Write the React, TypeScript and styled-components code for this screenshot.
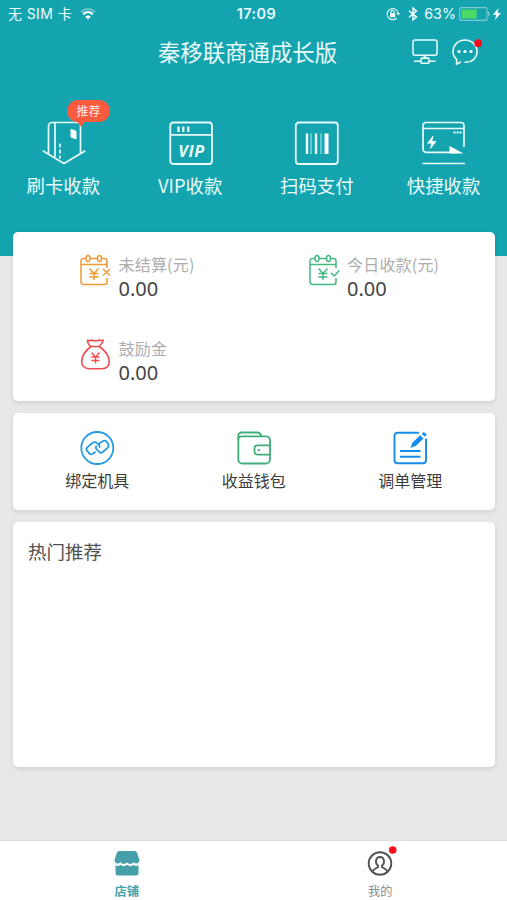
import React from 'react';
import styled, { createGlobalStyle } from 'styled-components';

const TEAL = '#14a4b0';

const GlobalStyle = createGlobalStyle`
  * { box-sizing: border-box; }
  body {
    margin: 0;
    background: #e8e8e8;
    font-family: "Noto Sans CJK SC", "Noto Sans", sans-serif;
    color: #444;
  }
  svg { display: block; overflow: visible; flex: none; }
`;

const Screen = styled.div`
  width: 507px;
  height: 900px;
  display: flex;
  flex-direction: column;
  overflow: hidden;
  background: #e8e8e8;
`;

const Hero = styled.header`
  height: 256px;
  flex: none;
  background: ${TEAL};
  color: #e9fbfc;
`;

const StatusBar = styled.div`
  height: 28px;
  padding: 0 6px 0 8px;
  display: grid;
  grid-template-columns: 1fr auto 1fr;
  align-items: center;
  font-family: Inter, "Noto Sans CJK SC", sans-serif;
  font-size: 14.5px;
  line-height: 28px;
`;

const Carrier = styled.div`
  display: flex;
  align-items: center;
  gap: 8px;
  font-size: 14px;
  letter-spacing: 0.4px;
`;

const Clock = styled.div`
  font-weight: 600;
  font-size: 14.5px;
  letter-spacing: 0.4px;
  padding-left: 4px;
`;

const Indicators = styled.div`
  display: flex;
  align-items: center;
  justify-content: flex-end;
`;

const BluetoothSlot = styled.span`
  margin-left: 8px;
`;

const BoltSlot = styled.span`
  margin-left: 2px;
`;

const Percent = styled.span`
  font-size: 14.3px;
  margin: 0 3px 0 6px;
`;

const TitleBar = styled.div`
  height: 48px;
  display: grid;
  grid-template-columns: 67px 1fr 67px;
  align-items: center;
  padding: 0 29px 0 17px;
`;

const Title = styled.h1`
  margin: 0;
  padding-bottom: 2px;
  grid-column: 2;
  text-align: center;
  font-size: 22.4px;
  line-height: 28px;
  font-weight: 400;
  white-space: nowrap;
`;

const TitleActions = styled.div`
  display: flex;
  justify-content: flex-end;
  gap: 14px;
`;

const QuickRow = styled.nav`
  display: grid;
  grid-template-columns: repeat(4, 1fr);
  padding-top: 45px;
`;

const QuickItem = styled.div`
  display: flex;
  flex-direction: column;
  align-items: center;
  position: relative;
`;

const QuickLabel = styled.span`
  margin-top: 6px;
  font-size: 18.4px;
  line-height: 29px;
`;

const Recommend = styled.span`
  position: absolute;
  left: 67px;
  top: -21px;
  width: 43px;
  height: 22px;
  border-radius: 11px;
  background: #fa5a3e;
  color: #ffece6;
  font-size: 12px;
  line-height: 22px;
  text-align: center;
  &::after {
    content: '';
    position: absolute;
    left: 9px;
    top: 20px;
    border: 5px solid transparent;
    border-top: 7px solid #fa5a3e;
    border-bottom: 0;
  }
`;

const Content = styled.main`
  flex: 1;
  margin-top: -24px;
  padding: 0 12px 0 13px;
  display: flex;
  flex-direction: column;
  gap: 12px;
`;

const Card = styled.section<{ $height: number }>`
  height: ${({ $height }) => $height}px;
  flex: none;
  background: #fff;
  border-radius: 5px;
  box-shadow: 0 2px 5px rgba(0, 0, 0, 0.1);
`;

const StatsCard = styled(Card)`
  display: grid;
  grid-template-columns: 228.5px 1fr;
  grid-template-rows: 84px 85px;
  padding-left: 67px;
`;

const Stat = styled.div`
  display: flex;
  align-items: flex-start;
  gap: 7.5px;
  padding-top: 22px;
`;

const StatText = styled.div`
  margin-top: -1px;
`;

const StatLabel = styled.div`
  font-size: 16px;
  line-height: 22px;
  letter-spacing: 0.2px;
  color: #adadad;
`;

const StatValue = styled.div`
  font-family: "Noto Sans", sans-serif;
  font-size: 20px;
  line-height: 28px;
  color: #444;
`;

const ToolsCard = styled(Card)`
  display: grid;
  grid-template-columns: repeat(3, 156.5px);
  padding: 18px 0 0 6px;
`;

const Tool = styled.div`
  display: flex;
  flex-direction: column;
  align-items: center;
`;

const ToolLabel = styled.span`
  margin-top: 4px;
  font-size: 16px;
  line-height: 23px;
  color: #3c3c3c;
`;

const HotTitle = styled.h2`
  margin: 0;
  padding: 15px;
  font-size: 18.5px;
  line-height: 28px;
  font-weight: 400;
  color: #505050;
`;

const TabBar = styled.footer`
  height: 60px;
  flex: none;
  display: grid;
  grid-template-columns: 1fr 1fr;
  background: #fff;
  border-top: 1px solid #dcdcdc;
`;

const Tab = styled.div<{ $active?: boolean }>`
  display: flex;
  flex-direction: column;
  align-items: center;
  padding-top: 9px;
  font-size: 12.2px;
  line-height: 18px;
  gap: 6px;
  font-weight: ${({ $active }) => ($active ? 700 : 400)};
  color: ${({ $active }) => ($active ? '#3fa3ad' : '#8c8c8c')};
`;

const WifiIcon = () => (
  <svg width="16" height="12" viewBox="0 0 16 12" fill="none" stroke="#fff">
    <path d="M1 4.2C5-.1 11-.1 15 4.2" strokeWidth="1.6" opacity=".45" />
    <path d="M3.3 6.3c2.8-2.8 6.6-2.8 9.4 0" strokeWidth="2.2" />
    <path d="M8 11.5 5.2 8.7c1.6-1.5 4-1.5 5.6 0z" fill="#fff" stroke="none" />
  </svg>
);

const LockIcon = () => (
  <svg width="14" height="14" viewBox="0 0 14 14" fill="none" stroke="#e9fbfc" strokeWidth="1.1">
    <path d="M10.7 11A5.6 5.6 0 1 1 12.2 6" />
    <path d="m10.4 6 1.9 2.6L14 6z" fill="#e9fbfc" stroke="none" />
    <rect x="4" y="6.2" width="5.2" height="4" fill="#fff" stroke="none" />
    <path d="M5 6.5V5a1.6 1.6 0 0 1 3.2 0v1.5" />
  </svg>
);

const BluetoothIcon = () => (
  <svg width="10" height="14" viewBox="0 0 10 14" fill="none" stroke="#fff" strokeWidth="1.4">
    <path d="m1 3.8 7.5 6.3L5 13V1l3.5 2.9L1 10.2" />
  </svg>
);

const BatteryIcon = () => (
  <svg width="32" height="14" viewBox="0 0 32 14">
    <rect x=".6" y=".6" width="27.4" height="12.8" rx="2" fill="none" stroke="#7fc9d0" strokeWidth="1.1" />
    <rect x="2.5" y="2.5" width="15.2" height="9" fill="#4cd964" />
    <path d="M29.2 4.5c2 .6 2 4.4 0 5z" fill="#7fc9d0" />
  </svg>
);

const BoltIcon = () => (
  <svg width="8" height="12" viewBox="0 0 8 12">
    <path d="M5.5 0 0 6.7h3.2L2 12l6-7.1H4.7z" fill="#fff" />
  </svg>
);

const TerminalIcon = () => (
  <svg width="26" height="26" viewBox="0 0 26 26" fill="none" stroke="#e9fbfc" strokeWidth="1.5">
    <rect x="1" y="1" width="24" height="15.3" rx="2" />
    <path d="M13 16.3v3M2 22.2h7M17 22.2h6.5" />
    <rect x="9" y="19.3" width="8" height="5" rx=".8" />
    <path d="M10.5 18.7h5" strokeWidth="1.8" />
  </svg>
);

const ChatIcon = () => (
  <svg width="26" height="26" viewBox="0 0 26 26" fill="none" stroke="#e9fbfc" strokeWidth="1.6">
    <path d="M12.5 23.2C20 23.8 25 19 25 12.6 25 6 19.8 1 13 1S1 6 1 12.6c0 3.4 1.4 5.9 3.7 8.1l-.2 4.5L9 22.8" strokeLinejoin="round" />
    <g fill="#fff" stroke="none">
      <circle cx="7" cy="12.5" r="1.6" />
      <circle cx="13" cy="12.5" r="1.6" />
      <circle cx="19" cy="12.5" r="1.6" />
    </g>
    <circle cx="26.2" cy="4.2" r="3.9" fill="#fc0d1b" stroke="none" />
  </svg>
);

const SwipeIcon = () => (
  <svg width="43" height="44" viewBox="0 0 43 44" fill="none" stroke="#e9fbfc" strokeWidth="1.7">
    <path d="M6.5 32.5V5A3.5 3.5 0 0 1 10 1.500h25.500q3 0 3 3v28" />
    <path d="M13 1.5V36M.7 29.8 22 42.5l21.300-12.700" strokeLinejoin="round" />
    <path d="m29 8.300 5 2V18l-5-2z" fill="#fff" stroke="#fff" strokeWidth="1" />
    <path d="M18 22.500v15" strokeDasharray="4 2" />
  </svg>
);

const VipText = styled.text`
  font-family: "Open Sans", "Noto Sans", sans-serif;
  font-size: 16.3px;
  font-weight: 700;
  font-style: italic;
  letter-spacing: 0.6px;
  fill: #e9fbfc;
  stroke: none;
`;

const VipIcon = () => (
  <svg width="43" height="44" viewBox="0 0 43 44" fill="none" stroke="#e9fbfc" strokeWidth="1.8">
    <rect x="1.3" y="1.5" width="41.7" height="41.5" rx="3" />
    <path d="M1.3 13.8H43" />
    <path d="M9.5 5.5V11M14.3 5.5V11M19.3 5.5V11" strokeWidth="2.2" />
    <VipText x="9.3" y="35.5">VIP</VipText>
  </svg>
);

const ScanIcon = () => (
  <svg width="43" height="44" viewBox="0 0 43 44" fill="none" stroke="#e9fbfc" strokeWidth="1.8">
    <rect x="0.8" y="1.5" width="42" height="41.5" rx="3" />
    <path d="M12 12.5V33M21 12.5V33" strokeWidth="2.4" />
    <path d="M16 12.5V33M26 12.5V33" strokeWidth="1.6" opacity=".5" />
    <path d="M31.5 12.5V33" stroke="#fff" strokeWidth="4" />
  </svg>
);

const QuickPayIcon = () => (
  <svg width="43" height="44" viewBox="0 0 43 44" fill="none" stroke="#e9fbfc" strokeWidth="1.7">
    <path d="M34 31.3H4a3 3 0 0 1-3-3V4.5a3 3 0 0 1 3-3h35a3 3 0 0 1 3 3V26M1 7.500h41M.5 42.500h42.500" />
    <path d="M31.5 11.500h8" strokeDasharray="2 1" strokeWidth="2" />
    <path d="m11 15-5.500 7.300h4L8.500 27.500l5.500-7h-4z" fill="#fff" stroke="#fff" strokeWidth=".6" />
    <path d="m27.500 25 14 7.500h-14z" fill="#fff" stroke="none" />
  </svg>
);

const CalendarIcon = ({ color, done }: { color: string; done?: boolean }) => (
  <svg width="31" height="32" viewBox="0 0 31 32" fill="none" stroke={color} strokeWidth="1.5">
    <path d="M6 4.5H3.500A2.500 2.500 0 0 0 1 7v20.500A2.500 2.500 0 0 0 3.500 30.500h21a2.500 2.500 0 0 0 2.500-2.500V24M27 14V7a2.500 2.500 0 0 0-2.500-2.500H22M10 4.500h7.500M1 10.500h26" />
    <ellipse cx="8" cy="4.5" rx="2" ry="3" />
    <ellipse cx="19.5" cy="4.5" rx="2" ry="3" />
    <path d="m9.500 14.500 4.500 5 4.500-5M14 19.500V26M9.500 19.500h9M9.500 23h9" />
    <path d={done ? 'm22 19 3.2 3 5-5.5' : 'm23 15 7 6.5M30 15l-7 6.5'} />
  </svg>
);

const MoneyBagIcon = () => (
  <svg width="31" height="32" viewBox="0 0 31 32" fill="none" stroke="#ef4b4e" strokeWidth="1.6" strokeLinejoin="round">
    <path d="M11 8.500C8 6.500 7.500 4 7.500 2.200q2.500 1 4.300-.2 3.700 2 7.500 0 2 1 4 .2c-.5 2.700-2 4.300-4 6.300zM11 8.500C6 12 2 17.500 1.700 23.300 1.500 28 5 30.700 9 30.700h13c4.500 0 7.500-2.700 7.200-7.400C29 17 24.500 12 19.300 8.500" />
    <path d="m11.500 14.500 4 4.500 4-4.500M15.500 19v6.500M11.500 19h8M11.500 22.500h8" strokeWidth="1.3" />
  </svg>
);

const LinkIcon = () => (
  <svg width="34" height="34" viewBox="0 0 34 34" fill="none" stroke="#239be0" strokeWidth="1.8">
    <circle cx="17.3" cy="17" r="16" />
    <g strokeLinecap="round" strokeLinejoin="round">
      <path d="M15 21.300 12.400 23Q10.500 24 9.200 22.200L7 19.700Q5.600 17.900 7.300 16.400L12.700 11.800Q15 10.300 16.700 11.800L18.400 13.400" />
      <path d="M16.200 15.200Q15.200 16.800 16.500 18.200L19.200 21Q20.900 22.500 22.800 21L27.500 16.800Q29.300 15 28.200 13L26.800 10.700Q25.500 9 23.500 9.800L20.500 11.500Q18.800 12.600 19.300 14.300L19.500 16" />
    </g>
  </svg>
);

const WalletIcon = () => (
  <svg width="34" height="34" viewBox="0 0 34 34" fill="none" stroke="#3fae7c" strokeWidth="1.8">
    <path d="M1.3 9V4.700A3.200 3.200 0 0 1 4.500 1.500H20.500q2.700 0 4 3.700" />
    <path d="M1.3 28.500V8.500A3.200 3.200 0 0 1 4.500 5.300H29a4 4 0 0 1 4 4v19.200a4 4 0 0 1-4 4H5.300a4 4 0 0 1-4-4z" />
    <path d="M33 14.300H20.500q-3 0-3 3v3.400q0 3 3 3H33M20.500 19.200H23" />
  </svg>
);

const OrderIcon = () => (
  <svg width="34" height="34" viewBox="0 0 34 34" fill="none" stroke="#168cec" strokeWidth="1.9">
    <path d="M26 1.700H4.500a3 3 0 0 0-3 3v24.500a3 3 0 0 0 3 3H30a3 3 0 0 0 3-3V7.500" />
    <path d="M7 20h20.500M7 25.700h20.500" strokeWidth="2" />
    <path d="m18.500 16 1.600-4.200 7-6.800 2.600 2.600-7 6.700z" fill="#168cec" strokeWidth="1.2" />
    <path d="m29.800 2 3 2.700" strokeWidth="3" />
  </svg>
);

const ShopIcon = () => (
  <svg width="26" height="26" viewBox="0 0 26 26" fill="#46a0aa">
    <path d="M5.5 1h15q2 0 2.600 1.800L25.500 10c0 3.500-3.700 4.500-6 2.200-2 2.300-4.700 2.300-6.500 0-1.800 2.300-4.500 2.300-6.500 0C4.200 14.500.5 13.500.5 10l2.400-7.200Q3.500 1 5.500 1z" />
    <path d="M1.500 15.300q2.700 1.700 5-.5 3 2.700 6.500 0 3.500 2.700 6.500 0 2.300 2.200 5 .5V23q0 2.500-2.500 2.500H4Q1.500 25.500 1.500 23z" />
  </svg>
);

const ProfileIcon = () => (
  <svg width="26" height="26" viewBox="0 0 26 26" fill="none" stroke="#555" strokeWidth="1.9">
    <circle cx="13" cy="13.500" r="11.300" />
    <path d="M5.500 21.500c1.500-3 3.700-3.600 5.500-4.300v-1.500C7.500 12.500 8.800 7 13 7s5.500 5.500 2 8.700v1.500c1.800.7 4 1.300 5.500 4.300" />
    <circle cx="25.700" cy="0" r="3.800" fill="#fc0d1b" stroke="none" />
  </svg>
);

const quickActions = [
  { label: '刷卡收款', Icon: SwipeIcon, recommended: true },
  { label: 'VIP收款', Icon: VipIcon },
  { label: '扫码支付', Icon: ScanIcon },
  { label: '快捷收款', Icon: QuickPayIcon },
];

const stats = [
  { label: '未结算(元)', icon: <CalendarIcon color="#f09a36" /> },
  { label: '今日收款(元)', icon: <CalendarIcon color="#43b883" done /> },
  { label: '鼓励金', icon: <MoneyBagIcon /> },
];

const tools = [
  { label: '绑定机具', Icon: LinkIcon },
  { label: '收益钱包', Icon: WalletIcon },
  { label: '调单管理', Icon: OrderIcon },
];

export default function App() {
  return (
    <Screen>
      <GlobalStyle />
      <Hero>
        <StatusBar>
          <Carrier>无 SIM 卡 <WifiIcon /></Carrier>
          <Clock>17:09</Clock>
          <Indicators>
            <LockIcon />
            <BluetoothSlot><BluetoothIcon /></BluetoothSlot>
            <Percent>63%</Percent>
            <BatteryIcon />
            <BoltSlot><BoltIcon /></BoltSlot>
          </Indicators>
        </StatusBar>
        <TitleBar>
          <Title>秦移联商通成长版</Title>
          <TitleActions>
            <TerminalIcon />
            <ChatIcon />
          </TitleActions>
        </TitleBar>
        <QuickRow>
          {quickActions.map(({ label, Icon, recommended }) => (
            <QuickItem key={label}>
              <Icon />
              {recommended && <Recommend>推荐</Recommend>}
              <QuickLabel>{label}</QuickLabel>
            </QuickItem>
          ))}
        </QuickRow>
      </Hero>
      <Content>
        <StatsCard $height={169}>
          {stats.map(({ label, icon }) => (
            <Stat key={label}>
              {icon}
              <StatText>
                <StatLabel>{label}</StatLabel>
                <StatValue>0.00</StatValue>
              </StatText>
            </Stat>
          ))}
        </StatsCard>
        <ToolsCard $height={97}>
          {tools.map(({ label, Icon }) => (
            <Tool key={label}>
              <Icon />
              <ToolLabel>{label}</ToolLabel>
            </Tool>
          ))}
        </ToolsCard>
        <Card $height={245}>
          <HotTitle>热门推荐</HotTitle>
        </Card>
      </Content>
      <TabBar>
        <Tab $active><ShopIcon />店铺</Tab>
        <Tab><ProfileIcon />我的</Tab>
      </TabBar>
    </Screen>
  );
}
